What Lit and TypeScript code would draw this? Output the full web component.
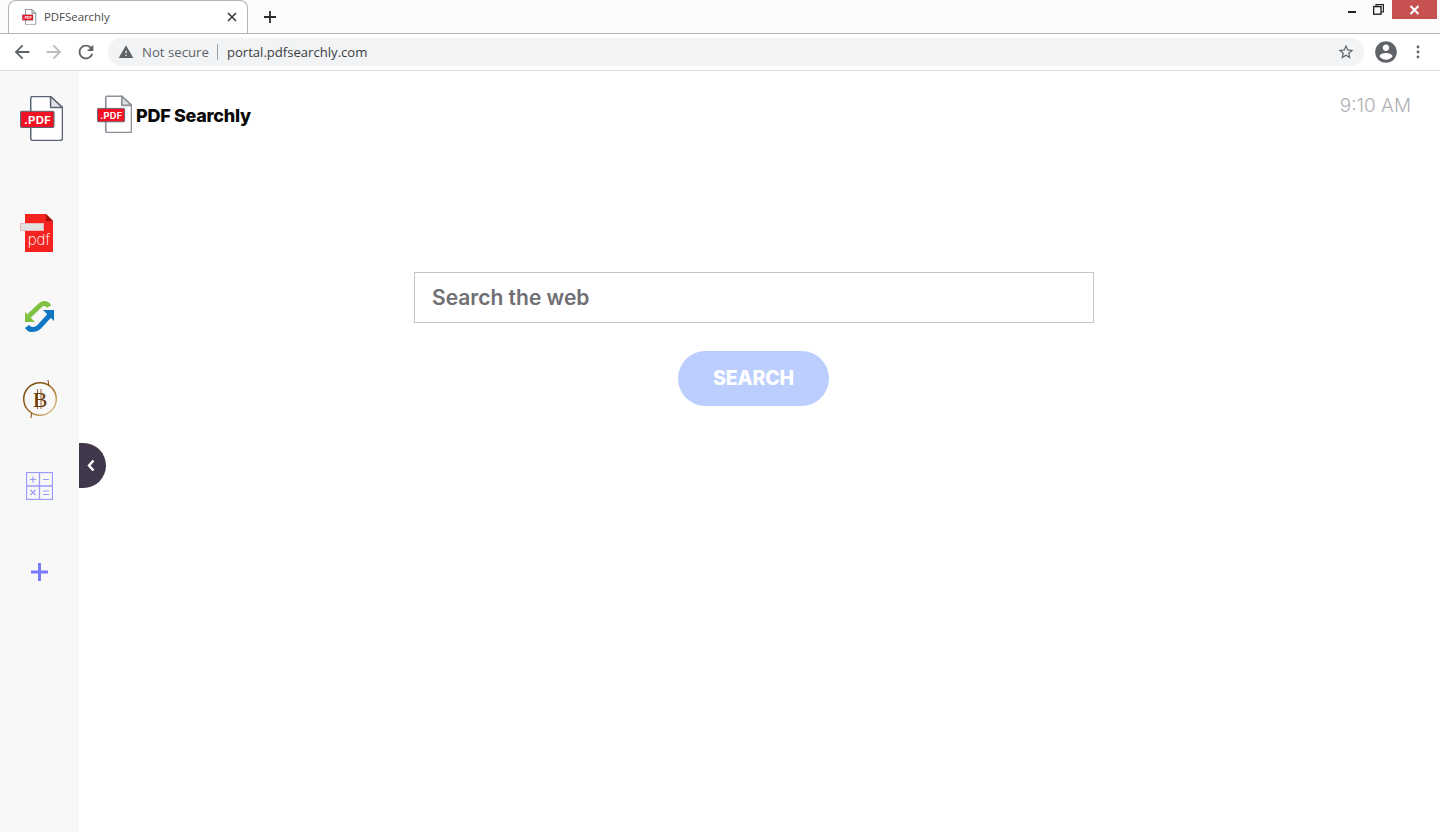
import { LitElement, html, css, svg } from "lit";
import { customElement } from "lit/decorators.js";

const docIcon = (stroke: string, sw: number) => svg`
  <path d="M9.5 1.5H27L37.5 12V41.5a2 2 0 0 1-2 2H11.5a2 2 0 0 1-2-2V3.5a2 2 0 0 1 2-2z" fill="#fff" stroke="${stroke}" stroke-width="${sw}"/>
  <path d="M27 1.5V12H37.5z" fill="#dfe1e6" stroke="${stroke}" stroke-width="${sw}" stroke-linejoin="round"/>
  <rect x="0.5" y="15.5" width="29.5" height="15.5" rx="1" fill="#f11324" stroke="#5b6472" stroke-width="1"/>
  <text x="15.5" y="27.5" text-anchor="middle" font-family="Inter, sans-serif" font-weight="700" font-size="10" fill="#fff" letter-spacing=".3">.PDF</text>
`;

@customElement("app-root")
export class AppRoot extends LitElement {
  static styles = css`
    :host { display: block; height: 100vh; overflow: hidden; background: #fff; font-family: "Open Sans", sans-serif; }
    svg { display: block; flex: none; }
    .strip { height: 33px; background: #fbfbfb; border-bottom: 1px solid #b4b4b4; display: flex; position: relative; }
    .tab {
      width: 240px; height: 33px; margin-left: 8px; box-sizing: border-box; background: #fff;
      border: 1px solid #b4b4b4; border-bottom: none; border-radius: 8px 8px 0 0; margin-bottom: -1px;
      display: flex; align-items: center; padding: 0 10px 0 12px; position: relative;
    }
    .tab-title { font-size: 11.4px; color: #4a4a4a; margin: -2px 0 0 7px; flex: 1; white-space: nowrap; }
    .newtab { margin: 10px 0 0 15px; }
    .winctl { margin-left: auto; display: flex; align-items: flex-start; height: 19px; }
    .min { margin: 11px 0 0 0; width: 8px; height: 2px; background: #222; }
    .restore { margin: 4px 0 0 17px; }
    .close { margin-left: 8px; margin-right: 3px; width: 45px; height: 19px; background: #c75050; display: flex; align-items: center; justify-content: center; }
    .toolbar { box-sizing: border-box; height: 37px; padding-left: 1px; background: #fff; border-bottom: 1px solid #dcdcdc; display: flex; align-items: center; }
    .nav { margin-left: 10px; }
    .omni { margin-left: 11px; width: 1256px; height: 28px; border-radius: 14px; background: #f1f3f4; display: flex; align-items: center; box-sizing: border-box; padding: 0 9px 0 10px; }
    .ns { font-size: 13.2px; color: #5f6368; margin-left: 8px; white-space: nowrap; }
    .sep { width: 1px; height: 16px; background: #9aa0a6; margin: 0 9px 0 8px; }
    .url { font-size: 13.1px; color: #3c4043; flex: 1; white-space: nowrap; }
    .avatar { margin-left: 9px; }
    .kebab { margin-left: 17px; }
    .page { display: flex; height: 761px; position: relative; }
    .side { width: 79px; flex: none; background: #f8f8f8; display: flex; flex-direction: column; padding-top: 24px; box-sizing: border-box; padding-left: 20px; }
    .i-red { margin-top: 73px; }
    .i-arrows { margin: 47px 0 0 4px; }
    .i-btc { margin: 46px 0 0 2px; }
    .i-calc { margin: 53px 0 0 6px; }
    .i-plus { margin: 63px 0 0 11px; }
    .toggle { position: absolute; left: 79px; top: 372px; width: 27px; height: 45px; box-sizing: border-box; padding-right: 3px; background: #40384a; border-radius: 0 23px 23px 0; display: flex; align-items: center; justify-content: center; }
    .main { flex: 1; display: flex; flex-direction: column; min-width: 0; }
    .head { display: flex; justify-content: space-between; padding: 24px 29px 0 18px; height: 177px; box-sizing: border-box; }
    .brand { display: flex; align-items: center; height: 38px; }
    .brand-name { font-family: Inter, sans-serif; font-weight: 800; font-size: 18px; letter-spacing: -0.3px; color: #0a0a0a; margin-left: 4px; margin-top: 2px; white-space: nowrap; }
    .time { font-family: Inter, sans-serif; font-size: 19px; color: #b0b0b5; font-weight: 300; white-space: nowrap; margin-top: -1px; }
    .center { display: flex; flex-direction: column; align-items: center; padding: 24px 11px 0 0; }
    .box { width: 680px; height: 51px; box-sizing: border-box; border: 1px solid #c4c4c4; padding: 0 0 0 17px; display: flex; align-items: center; font-family: Inter, sans-serif; font-weight: 600; font-size: 21px; color: #6f6f74; }
    .btn { margin: 28px 1px 0 0; width: 151px; height: 55px; box-sizing: border-box; padding-bottom: 2px; border-radius: 28px; background: #bbcefd; color: #fff; display: flex; align-items: center; justify-content: center; font-family: Inter, sans-serif; font-weight: 800; font-size: 19.5px; letter-spacing: -0.1px; }
  `;

  render() {
    return html`
      <div class="strip">
        <div class="tab">
          <svg width="16" height="16" viewBox="0 0 38 44">
            ${docIcon("#6b7280", 2)}
          </svg>
          <span class="tab-title">PDFSearchly</span>
          <svg width="10" height="10" viewBox="0 0 10 10"><path d="M1 1l8 8M9 1l-8 8" stroke="#3c4043" stroke-width="1.7"/></svg>
        </div>
        <svg class="newtab" width="14" height="14" viewBox="0 0 14 14"><path d="M7 1v12M1 7h12" stroke="#2b2b2b" stroke-width="1.8"/></svg>
        <div class="winctl">
          <div class="min"></div>
          <svg class="restore" width="11" height="11" viewBox="0 0 11 11" fill="none" stroke="#222" stroke-width="1.2"><rect x="0.6" y="2.6" width="7.4" height="7.6" stroke-width="1.4"/><path d="M3 2.4V.6h7.4v7.4H8.2"/></svg>
          <div class="close"><svg width="11" height="10" viewBox="0 0 11 10"><path d="M1.5 1l8 8M9.5 1l-8 8" stroke="#fff" stroke-width="2"/></svg></div>
        </div>
      </div>
      <div class="toolbar">
        <svg class="nav" width="22" height="22" viewBox="0 0 24 24" fill="#5f6368"><path d="M20 11H7.83l5.59-5.59L12 4l-8 8 8 8 1.41-1.41L7.83 13H20v-2z"/></svg>
        <svg class="nav" width="22" height="22" viewBox="0 0 24 24" fill="#b9bcc0"><path d="M12 4l-1.41 1.41L16.17 11H4v2h12.17l-5.58 5.59L12 20l8-8z"/></svg>
        <svg class="nav" width="22" height="22" viewBox="0 0 24 24" fill="#5f6368"><path d="M17.65 6.35C16.2 4.9 14.21 4 12 4c-4.42 0-7.99 3.58-7.99 8s3.57 8 7.99 8c3.73 0 6.84-2.55 7.73-6h-2.08c-.82 2.33-3.04 4-5.65 4-3.31 0-6-2.69-6-6s2.69-6 6-6c1.66 0 3.14.69 4.22 1.78L13 11h7V4l-2.35 2.35z"/></svg>
        <div class="omni">
          <svg width="16" height="16" viewBox="0 0 24 24" fill="#5f6368"><path d="M1 21h22L12 2 1 21zm12-3h-2v-2h2v2zm0-4h-2v-4h2v4z"/></svg>
          <span class="ns">Not secure</span><span class="sep"></span>
          <span class="url">portal.pdfsearchly.com</span>
          <svg width="18" height="18" viewBox="0 0 24 24" fill="#5f6368"><path d="M22 9.24l-7.19-.62L12 2 9.19 8.63 2 9.24l5.46 4.73L5.82 21 12 17.27 18.18 21l-1.63-7.03L22 9.24zM12 15.4l-3.76 2.27 1-4.28-3.32-2.88 4.38-.38L12 6.1l1.71 4.04 4.38.38-3.32 2.88 1 4.28L12 15.4z"/></svg>
        </div>
        <svg class="avatar" width="26" height="26" viewBox="0 0 24 24" fill="#5f6368"><path d="M12 2C6.48 2 2 6.48 2 12s4.48 10 10 10 10-4.48 10-10S17.52 2 12 2zm0 3c1.66 0 3 1.34 3 3s-1.34 3-3 3-3-1.34-3-3 1.34-3 3-3zm0 14.2c-2.5 0-4.71-1.28-6-3.22.03-1.99 4-3.08 6-3.08 1.99 0 5.97 1.09 6 3.08-1.29 1.94-3.5 3.22-6 3.22z"/></svg>
        <svg class="kebab" width="4" height="14" viewBox="0 0 4 14" fill="#5f6368"><circle cx="2" cy="2" r="1.4"/><circle cx="2" cy="7" r="1.4"/><circle cx="2" cy="12" r="1.4"/></svg>
      </div>
      <div class="page">
        <aside class="side">
          <svg width="43" height="46" viewBox="0 0 38 44" preserveAspectRatio="none">${docIcon("#5b6472", 1.3)}</svg>
          <svg class="i-red" width="33" height="40" viewBox="0 0 33 40">
            <path d="M5 0H26L33 7V38H5z" fill="#f5231f"/>
            <path d="M26 0L33 7H26z" fill="#a50f0b"/>
            <rect x="0.5" y="9.5" width="23" height="7" fill="#e2e2e2" stroke="#eab4b8"/>
            <text x="19" y="31" text-anchor="middle" font-family="Inter, sans-serif" font-size="15" font-weight="200" fill="#fff">pdf</text>
          </svg>
          <svg class="i-arrows" width="31" height="32" viewBox="0 0 31 32" fill="none">
            <path d="M5 15L16 4.5c3-3 7-2.5 9 1" stroke="#7fc241" stroke-width="5"/>
            <path d="M1 12v10h10z" fill="#7fc241" transform="translate(0 -1)"/>
            <path d="M26 14L15 26c-3 3-9 4-12-.5" stroke="#0f75c5" stroke-width="5"/>
            <path d="M30 5v11L19 5z" fill="#0f75c5" transform="translate(0 4)"/>
          </svg>
          <svg class="i-btc" width="36" height="40" viewBox="0 0 36 40" fill="none">
            <defs><linearGradient id="g" x1="0" y1="0" x2="1" y2="1"><stop offset="0" stop-color="#6b3b0a"/><stop offset=".6" stop-color="#a8741e"/><stop offset="1" stop-color="#f0e2bf"/></linearGradient></defs>
            <circle cx="18" cy="20" r="16.3" stroke="url(#g)" stroke-width="1.5"/>
            <path d="M26 1l.8 6M9 39l.5-5" stroke="#7a4a10" stroke-width="1"/>
            <text x="18" y="28" text-anchor="middle" font-family="Liberation Serif, serif" font-size="22" fill="#6b3b0a">B</text>
            <path d="M15.5 10v20M19 10v20" stroke="#6b3b0a" stroke-width=".8"/>
          </svg>
          <svg class="i-calc" width="27" height="28" viewBox="0 0 27 28" fill="none" stroke="#9a9afa">
            <rect x="0.5" y="0.5" width="26" height="27" stroke-width="1.3"/>
            <path d="M13.5 0v28M0 14h27" stroke-width="1.3"/>
            <path d="M4 7.5h6M7 4.5v6M17 7.5h6M4.5 18l5 5M9.5 18l-5 5M17 19h6M17 22.5h6" stroke-width="1.2"/>
          </svg>
          <svg class="i-plus" width="17" height="18" viewBox="0 0 17 18"><path d="M8.5 0v18M0 9h17" stroke="#7b7bff" stroke-width="3"/></svg>
        </aside>
        <div class="toggle"><svg width="8" height="13" viewBox="0 0 8 13" fill="none"><path d="M6.5 1.5L2 6.5l4.5 5" stroke="#fff" stroke-width="2.4"/></svg></div>
        <main class="main">
          <div class="head">
            <div class="brand">
              <svg width="35" height="38" viewBox="0 0 38 44" preserveAspectRatio="none">${docIcon("#8a8f98", 1.8)}</svg>
              <span class="brand-name">PDF Searchly</span>
            </div>
            <div class="time">9:10 AM</div>
          </div>
          <div class="center">
            <div class="box">Search the web</div>
            <div class="btn">SEARCH</div>
          </div>
        </main>
      </div>
    `;
  }
}
